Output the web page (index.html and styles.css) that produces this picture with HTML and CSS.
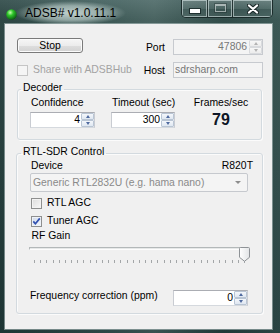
FILE: index.html
```html
<!DOCTYPE html>
<html lang="en">
<head>
<meta charset="utf-8">
<title>ADSB#</title>
<link rel="stylesheet" href="styles.css">
</head>
<body>
<div class="window">
  <header class="titlebar">
    <svg class="app-icon" width="11" height="11" viewBox="0 0 11 11">
      <defs>
        <radialGradient id="orb" cx="38%" cy="32%" r="70%">
          <stop offset="0" stop-color="#c8ffb0"/>
          <stop offset=".4" stop-color="#2fc72a"/>
          <stop offset="1" stop-color="#0a5a12"/>
        </radialGradient>
      </defs>
      <circle cx="5.5" cy="5.5" r="5.3" fill="url(#orb)"/>
    </svg>
    <span class="title">ADSB# v1.0.11.1</span>
    <div class="caption">
      <div class="cbtn cbtn-min"><span class="glyph-min"></span></div>
      <div class="cbtn cbtn-max"><span class="glyph-max"></span></div>
      <div class="cbtn cbtn-close">
        <svg width="12" height="10" viewBox="0 0 12 10">
          <path d="M2 1.5 L10 8.5 M10 1.5 L2 8.5" stroke="#1d2b2b" stroke-width="4.2" stroke-linecap="round"/>
          <path d="M2 1.5 L10 8.5 M10 1.5 L2 8.5" stroke="#ffffff" stroke-width="2.2" stroke-linecap="round"/>
        </svg>
      </div>
    </div>
  </header>

  <main class="client">
    <section class="top">
      <div class="top-row">
        <div class="btn">Stop</div>
        <div class="field field-port">
          <span class="field-label">Port</span>
          <div class="spin spin-port is-disabled">
            <span class="spin-val">47806</span>
            <span class="spin-arrows"><span class="arr arr-up"></span><span class="arr arr-dn"></span></span>
          </div>
        </div>
      </div>
      <div class="top-row top-row-2">
        <div class="check check-share is-disabled"><span class="box"></span><span class="check-label">Share with ADSBHub</span></div>
        <div class="field">
          <span class="field-label">Host</span>
          <div class="textbox is-disabled">sdrsharp.com</div>
        </div>
      </div>
    </section>

    <fieldset class="group group-decoder">
      <legend>Decoder</legend>
      <div class="dec-cols">
        <div class="dec-col col-conf">
          <div class="col-label">Confidence</div>
          <div class="spin">
            <span class="spin-val">4</span>
            <span class="spin-arrows"><span class="arr arr-up"></span><span class="arr arr-dn"></span></span>
          </div>
        </div>
        <div class="dec-col col-timeout">
          <div class="col-label">Timeout (sec)</div>
          <div class="spin">
            <span class="spin-val">300</span>
            <span class="spin-arrows"><span class="arr arr-up"></span><span class="arr arr-dn"></span></span>
          </div>
        </div>
        <div class="dec-col col-fps">
          <div class="col-label">Frames/sec</div>
          <div class="fps">79</div>
        </div>
      </div>
    </fieldset>

    <fieldset class="group group-rtl">
      <legend>RTL-SDR Control</legend>
      <div class="dev-row"><span class="dev-label">Device</span><span>R820T</span></div>
      <div class="combo is-disabled"><span class="combo-text">Generic RTL2832U (e.g. hama nano)</span><span class="caret"></span></div>
      <div class="check check-rtl"><span class="box"></span><span class="check-label">RTL AGC</span></div>
      <div class="check check-tuner is-checked">
        <span class="box">
          <svg width="9" height="9" viewBox="0 0 9 9"><path d="M1.3 4.4 L3.4 6.8 L7.8 1.4" fill="none" stroke="#3050b0" stroke-width="1.7"/></svg>
        </span>
        <span class="check-label">Tuner AGC</span>
      </div>
      <div class="rf-label">RF Gain</div>
      <div class="slider">
        <div class="track"></div>
        <svg class="thumb" width="11" height="15" viewBox="0 0 11 15">
          <defs>
            <linearGradient id="th" x1="0" y1="0" x2="1" y2="0">
              <stop offset="0" stop-color="#ffffff"/>
              <stop offset="1" stop-color="#e2e4e6"/>
            </linearGradient>
          </defs>
          <path d="M1.5 0.5 H9.5 Q10.5 0.5 10.5 1.5 V10.3 L5.5 14.3 L0.5 10.3 V1.5 Q0.5 0.5 1.5 0.5 Z" fill="url(#th)" stroke="#8e9296"/>
        </svg>
        <div class="ticks">
          <i></i><i></i><i></i><i></i><i></i><i></i><i></i><i></i><i></i><i></i>
          <i></i><i></i><i></i><i></i><i></i><i></i><i></i><i></i><i></i><i></i>
          <i></i><i></i><i></i><i></i><i></i><i></i><i></i><i></i><i></i><i></i>
          <i></i><i></i><i></i><i></i><i></i>
        </div>
      </div>
      <div class="freq-row">
        <span class="freq-label">Frequency correction (ppm)</span>
        <div class="spin spin-freq">
          <span class="spin-val">0</span>
          <span class="spin-arrows"><span class="arr arr-up"></span><span class="arr arr-dn"></span></span>
        </div>
      </div>
    </fieldset>
  </main>
</div>
</body>
</html>
```

FILE: styles.css
```css
* { box-sizing: border-box; }

html, body {
  margin: 0;
  padding: 0;
}

body {
  width: 280px;
  height: 333px;
  overflow: hidden;
  background: #1f3838;
  font-family: "Liberation Sans", Arial, sans-serif;
  font-size: 10.4px;
  color: #000;
}

/* ---------- window frame ---------- */
.window {
  width: 280px;
  height: 333px;
  display: flex;
  flex-direction: column;
  background:
    linear-gradient(90deg, rgba(0,0,0,.14) 0, rgba(255,255,255,.05) 40%, rgba(255,255,255,.1) 55%, rgba(0,0,0,.08) 80%, rgba(255,255,255,.04) 100%),
    linear-gradient(180deg, #4a6765 0, #35524f 20px, #2b4745 55%, #223d3c 100%);
}

.titlebar {
  height: 24px;
  flex: none;
  display: flex;
  align-items: flex-start;
  padding-left: 6px;
}

.app-icon {
  flex: none;
  margin-top: 9px;
}

.title {
  position: relative;
  z-index: 0;
  margin: 6px 0 0 8px;
  font-size: 12px;
  line-height: 14px;
  white-space: nowrap;
  color: #000;
}

.title::before {
  content: "";
  position: absolute;
  left: -10px;
  right: -10px;
  top: -5px;
  bottom: -5px;
  z-index: -1;
  background: radial-gradient(closest-side, rgba(205,220,217,.9), rgba(190,208,205,.65) 60%, rgba(190,208,205,0));
}

.caption {
  margin-left: auto;
  margin-right: 7px;
  height: 18px;
  display: flex;
  border: 1px solid rgba(18,32,32,.8);
  border-top: 0;
  border-radius: 0 0 5px 5px;
  overflow: hidden;
}

.cbtn {
  height: 100%;
  display: flex;
  justify-content: center;
  align-items: flex-start;
  background: linear-gradient(180deg, rgba(255,255,255,.16) 0, rgba(255,255,255,.07) 50%, rgba(0,0,0,.06) 52%, rgba(255,255,255,.06) 100%);
  box-shadow: inset 0 0 0 1px rgba(225,238,238,.55);
}

.cbtn + .cbtn { border-left: 1px solid rgba(18,32,32,.7); }

.cbtn-min { width: 25px; }
.cbtn-max { width: 25px; }
.cbtn-close { width: 40px; padding-top: 4px; }

.glyph-min {
  margin-top: 9px;
  width: 10px;
  height: 4px;
  background: #fff;
  box-shadow: 0 0 0 1px rgba(25,40,40,.85);
}

.glyph-max {
  margin-top: 4px;
  width: 11px;
  height: 8px;
  border: 1px solid rgba(255,255,255,.5);
  border-top-width: 2px;
  box-shadow: 0 0 0 1px rgba(25,40,40,.35);
}

/* ---------- client area ---------- */
.client {
  flex: none;
  height: 305px;
  margin: 0 8px 0 5px;
  background: #f0f0f0;
  box-shadow: 0 0 0 1px rgba(185,200,200,.55);
}

.top {
  padding: 14px 9px 0 12px;
}

.top-row {
  display: flex;
  justify-content: space-between;
  align-items: flex-start;
}

.top-row-2 {
  margin-top: 7px;
  align-items: center;
}

.btn {
  width: 66px;
  height: 15px;
  border: 1px solid #7a7a7a;
  border-radius: 3px;
  background: linear-gradient(180deg, #f6f6f6 0, #ececec 50%, #dedede 51%, #d2d2d2 100%);
  box-shadow: inset 0 0 0 1px #fbfbfb;
  text-align: center;
  line-height: 13px;
}

.field {
  display: flex;
  align-items: center;
}

.field-port { margin-top: 1px; }

.field-label {
  margin-right: 8px;
}

.textbox {
  width: 90px;
  height: 16px;
  border: 1px solid #c7cacf;
  background: #f4f4f4;
  color: #777;
  line-height: 14px;
  padding-left: 1px;
}

/* spin boxes */
.spin {
  display: flex;
  height: 16px;
  border: 1px solid #abadb3;
  border-color: #abadb3 #c9ccd2 #d5d9de #c9ccd2;
  background: #fff;
}

.spin-val {
  flex: 1;
  text-align: right;
  line-height: 14px;
  padding-right: 1px;
}

.spin-arrows {
  width: 13px;
  display: flex;
  flex-direction: column;
}

.arr {
  flex: 1;
  display: flex;
  align-items: center;
  justify-content: center;
  border: 1px solid #b9c5d4;
  border-radius: 1px;
  background: linear-gradient(180deg, #f4f7fb, #dfe7f1);
}

.arr::after {
  content: "";
  width: 0;
  height: 0;
  border-left: 2.5px solid transparent;
  border-right: 2.5px solid transparent;
}

.arr-up::after { border-bottom: 3px solid #4f6a9f; }
.arr-dn::after { border-top: 3px solid #4f6a9f; }

.spin.is-disabled {
  border-color: #c7cacf;
  background: #f4f4f4;
}

.spin.is-disabled .spin-val {
  color: #777;
  padding-right: 2px;
}

.spin.is-disabled .arr {
  border-color: #d8dadd;
  background: linear-gradient(180deg, #f7f7f7, #ececec);
}

.spin.is-disabled .arr-up::after { border-bottom-color: #b3b3b3; }
.spin.is-disabled .arr-dn::after { border-top-color: #b3b3b3; }

.spin-port { width: 90px; }

/* checkboxes */
.check {
  display: flex;
  align-items: flex-start;
  line-height: 12px;
}

.top-row-2 .check { align-items: center; }

.box {
  flex: none;
  width: 11px;
  height: 11px;
  margin-top: 1px;
  border: 1px solid #8e8f8f;
  background: linear-gradient(135deg, #dcdcdc, #f8f8f8);
  box-shadow: inset 0 0 0 1px #f2f2f2;
  display: flex;
  align-items: center;
  justify-content: center;
}

.check-label { margin-left: 5px; }

.check-share .box { margin-top: 0; }

.check.is-disabled .box {
  border-color: #c5c5c5;
  background: #f5f5f5;
  box-shadow: none;
}

.check.is-disabled .check-label { color: #a3a3a3; }

.check.is-checked .box {
  background: linear-gradient(135deg, #cfd9ea, #f4f7fb);
  box-shadow: inset 0 0 0 1px #eef2f8;
}

/* group boxes */
.group {
  margin: 0;
  min-width: 0;
  border: 1px solid #d3dadf;
  border-radius: 3px;
  box-shadow: inset 1px 1px 0 #fbfbfb, 1px 1px 0 #fbfbfb;
}

.group legend {
  margin-left: -9px;
  padding: 0 2px 2px;
  line-height: 12px;
}

.group-decoder {
  margin: 4px 10px 0 12px;
  padding: 1px 8px 11px 12px;
}

.group-rtl {
  margin: 6px 9px 0 11px;
  padding: 0 9px 7px 13px;
}

.dec-cols {
  display: flex;
  align-items: flex-start;
}

.dec-col { display: flex; flex-direction: column; }

.col-label {
  line-height: 12px;
  padding-left: 1px;
  margin-bottom: 3px;
  white-space: nowrap;
}

.col-conf { width: 65px; }
.col-timeout { width: 64px; margin-left: 16px; }
.col-fps { width: 56px; margin-left: 18px; text-align: center; }
.col-fps .col-label { padding-left: 0; }

.fps {
  font-size: 16px;
  font-weight: bold;
  line-height: 16px;
  color: #0d1626;
}

/* RTL group content */
.dev-row {
  display: flex;
  justify-content: space-between;
  line-height: 12px;
}

.dev-label { padding-left: 1px; }

.combo {
  width: 218px;
  height: 19px;
  margin-top: 1px;
  display: flex;
  align-items: center;
  border: 1px solid #c6c9ce;
  border-radius: 2px;
  background: #f4f4f4;
  padding: 0 6px 0 2px;
}

.combo-text {
  flex: 1;
  color: #8a8a8a;
  white-space: nowrap;
}

.caret {
  width: 0;
  height: 0;
  border-left: 3px solid transparent;
  border-right: 3px solid transparent;
  border-top: 3px solid #8d8d8d;
}

.check-rtl { margin-top: 5px; padding-left: 1px; }
.check-tuner { margin-top: 6px; padding-left: 1px; }

.rf-label {
  margin-top: 3px;
  line-height: 12px;
  padding-left: 1.5px;
}

.slider {
  position: relative;
  margin: 4px 0 0 -1px;
  width: 221px;
  height: 22px;
}

.track {
  margin-top: 5px;
  width: 216px;
  height: 3px;
  background: #e6e8e8;
  border-top: 1px solid #b3b8b9;
  border-left: 1px solid #b3b8b9;
  border-bottom: 1px solid #fdfdfd;
}

.thumb {
  position: absolute;
  right: 0;
  top: 0;
}

.ticks {
  margin: 10px 0 0 5px;
  width: 211px;
  height: 3px;
  display: flex;
  justify-content: space-between;
}

.ticks i {
  width: 1px;
  height: 3px;
  background: #a3a6a8;
}

.freq-row {
  width: 218px;
  margin-top: 21px;
  display: flex;
  justify-content: space-between;
  align-items: flex-start;
}

.freq-label {
  line-height: 12px;
  white-space: nowrap;
}

.spin-freq { width: 75px; }
```
